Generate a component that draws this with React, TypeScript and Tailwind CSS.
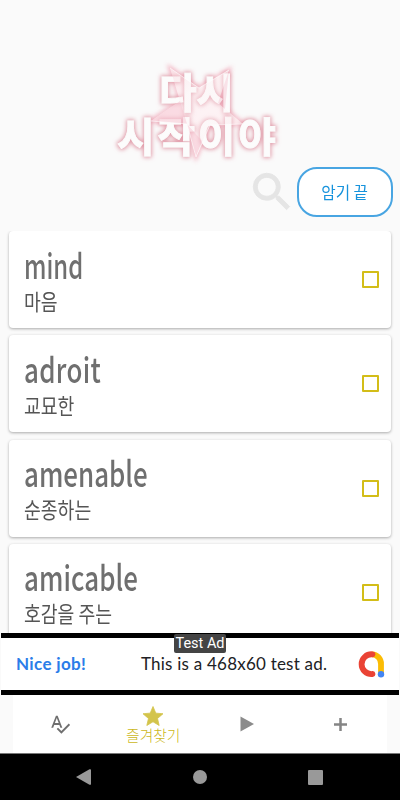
import type { ReactElement } from "react";

interface Word {
  id: string;
  term: string;
  meaning: string;
  fit: string;
}

const words: Word[] = [
  { id: "mind", term: "mind", meaning: "마음", fit: "scale-x-[0.68]" },
  { id: "adroit", term: "adroit", meaning: "교묘한", fit: "scale-x-[0.74] tracking-[0.4px]" },
  { id: "amenable", term: "amenable", meaning: "순종하는", fit: "scale-x-[0.74]" },
  { id: "amicable", term: "amicable", meaning: "호감을 주는", fit: "scale-x-[0.74] tracking-[0.1px]" },
];

const STAR_POINTS = "170,68 199,88 229,70 218,103 243,124 210,125 196,157 187,124 151,121 180,101";

function Logo(): ReactElement {
  return (
    <svg width="200" height="120" viewBox="100 50 200 120" className="mx-auto block overflow-visible">
      <defs>
        <filter id="glow" x="-20%" y="-30%" width="140%" height="160%">
          <feMorphology in="SourceAlpha" operator="dilate" radius="1" result="thick" />
          <feGaussianBlur in="thick" stdDeviation="2.3" result="blur" />
          <feFlood floodColor="#de8f9f" floodOpacity="0.9" />
          <feComposite in2="blur" operator="in" result="halo" />
          <feMerge>
            <feMergeNode in="halo" />
            <feMergeNode in="SourceGraphic" />
          </feMerge>
        </filter>
        <filter id="soft" x="-20%" y="-20%" width="140%" height="140%">
          <feGaussianBlur stdDeviation="2" />
        </filter>
        <linearGradient id="starFill" x1="0" y1="0" x2="1" y2="1">
          <stop offset="0" stopColor="#f3afbd" />
          <stop offset="0.35" stopColor="#fdf0f2" />
          <stop offset="0.65" stopColor="#fdf0f2" />
          <stop offset="1" stopColor="#f3afbd" />
        </linearGradient>
      </defs>
      <polygon points={STAR_POINTS} fill="none" stroke="#f0a0b2" strokeWidth="3.5" opacity="0.8" filter="url(#soft)" />
      <polygon points={STAR_POINTS} fill="#fdf3f5" />
      <g filter="url(#glow)" fill="#fcfcfc" stroke="#fcfcfc" strokeWidth="0.9" fontSize="41" fontWeight="700" fontFamily="'Noto Sans CJK KR', sans-serif">
        <text x="159" y="108" textLength="75">다시</text>
        <text x="117" y="152" textLength="159">시작이야</text>
      </g>
      <polygon points={STAR_POINTS} fill="url(#starFill)" opacity="0.35" />
      <path d="M170 68 180 101 151 121 187 124ZM229 70 218 103 225 109ZM187 124 196 157 202 141Z" fill="#f4b3c2" opacity="0.35" />
      <path d="M170 68 199 88 229 70M151 121 187 124 196 157 210 125 243 124" fill="none" stroke="#fff" strokeWidth="0.8" opacity="0.7" />
    </svg>
  );
}

function WordCard({ word }: { word: Word }): ReactElement {
  return (
    <li className="flex h-[97px] shrink-0 items-center justify-between rounded-[4px] bg-white pr-3 pl-[15px] shadow-[0_1px_3px_rgba(0,0,0,0.32)]">
      <div className="whitespace-nowrap">
        <div className={`h-[38px] origin-left text-[35px] leading-[38px] font-medium text-[#6f6f6f] ${word.fit}`}>
          {word.term}
        </div>
        <div className="mt-[2px] h-[30px] origin-left scale-x-[0.83] text-[22px] leading-[30px] text-[#555]">
          {word.meaning}
        </div>
      </div>
      <span className="h-[17px] w-[17px] rounded-[1px] border-2 border-[#d3bd18]" />
    </li>
  );
}

function AdBanner(): ReactElement {
  return (
    <div className="relative mx-px flex h-[62px] items-center border-y-[5px] border-black bg-white pr-[14px] pl-[15px] font-[Lato,sans-serif] text-[17px]">
      <span className="w-[125px] font-bold tracking-[0.35px] text-[#2b7de9]">Nice job!</span>
      <span className="flex-1 tracking-[0.22px] whitespace-nowrap text-[#202124]">This is a 468x60 test ad.</span>
      <svg width="27" height="27" viewBox="0 0 27 27" fill="none">
        <path d="M14 3.300A9.400 9.400 0 0 1 23 13V23" stroke="#fbbc04" strokeWidth="5.800" />
        <path d="M14.500 3.300A9.900 9.900 0 1 0 14.500 23" stroke="#ea4335" strokeWidth="5.800" strokeLinecap="round" />
        <circle cx="23" cy="23.200" r="3.200" fill="#4285f4" />
      </svg>
      <span className="absolute -top-[4px] left-[173px] h-[19px] w-[52px] rounded-[2px] bg-[#444] text-center font-[Roboto,sans-serif] text-[14.5px] leading-[20px] whitespace-nowrap text-white">
        Test Ad
      </span>
    </div>
  );
}

function BottomNav(): ReactElement {
  return (
    <nav className="mx-[13px] grid h-[58px] grid-cols-4 bg-white">
      <div className="flex items-center justify-center">
        <svg width="22" height="22" viewBox="0 0 24 24" fill="#6f6f6f">
          <path d="M12.45 16h2.09L9.43 3H7.57L2.46 16h2.09l1.12-3h5.64l1.14 3zm-6.02-5L8.5 5.48 10.57 11H6.43zm15.16.59l-8.09 8.09L9.83 16l-1.41 1.41 5.09 5.09L23 13l-1.41-1.41z" />
        </svg>
      </div>
      <div className="flex flex-col items-center pt-[11px] text-[#ccb719]">
        <svg width="20" height="20" viewBox="2 1.5 20 20" fill="#d3c44b" stroke="#d3c44b" strokeWidth="0.8" strokeLinejoin="round">
          <path d="M12 17.27 18.18 21l-1.64-7.03L22 9.24l-7.19-.61L12 2 9.19 8.63 2 9.24l5.46 4.73L5.82 21z" />
        </svg>
        <span className="text-[14.8px] leading-[18px] font-light whitespace-nowrap">즐겨찾기</span>
      </div>
      <div className="flex items-center justify-center">
        <svg width="14" height="16" viewBox="0 0 14 16">
          <path d="M0.5 0.5 14 8 0.5 15.5z" fill="#8b8b8b" />
        </svg>
      </div>
      <div className="flex items-center justify-center">
        <svg width="13" height="13" viewBox="0 0 13 13" stroke="#858585" strokeWidth="2.5">
          <path d="M6.5 0v13M0 6.5h13" />
        </svg>
      </div>
    </nav>
  );
}

function SystemBar(): ReactElement {
  return (
    <div className="flex h-[47px] items-center justify-between border-t border-[#777] bg-black pr-[77px] pl-[76px]">
      <svg width="15" height="16" viewBox="0 0 15 16" fill="#999">
        <path d="M0 8 13.5.3Q15-.2 15 1v14q0 1.200-1.500.7z" />
      </svg>
      <span className="h-[14px] w-[14px] rounded-full bg-[#999]" />
      <span className="h-[15px] w-[15px] rounded-[1px] bg-[#999]" />
    </div>
  );
}

export default function App(): ReactElement {
  return (
    <div className="flex h-[800px] w-[400px] flex-col overflow-hidden bg-[#fafafa] font-['Noto_Sans_CJK_KR',sans-serif]">
      <header className="h-[231px] shrink-0 pt-[50px]">
        <Logo />
        <div className="-mt-[3px] flex items-center justify-end pr-[7px]">
          <svg width="50" height="50" viewBox="0 0 24 24" fill="#e5e5e5" stroke="#e5e5e5" strokeWidth="0.4">
            <path d="M15.500 14h-.79l-.28-.27A6.471 6.471 0 0 0 16 9.500 6.500 6.500 0 1 0 9.500 16c1.610 0 3.090-.59 4.230-1.570l.27.28v.79l5 4.990L20.490 19l-4.990-5zm-6 0C7.010 14 5 11.990 5 9.500S7.010 5 9.500 5 14 7.010 14 9.500 11.990 14 9.500 14z" />
          </svg>
          <button type="button" className="h-[50px] w-24 rounded-[20px] border-2 border-[#48a5e2] bg-white text-[16.5px] text-[#1793dc]">
            <span className="inline-block scale-x-[0.95]">암기 끝</span>
          </button>
        </div>
      </header>
      <ul className="flex h-[402px] shrink-0 flex-col gap-[7.300px] overflow-hidden px-[9px]">
        {words.map((word) => (
          <WordCard key={word.id} word={word} />
        ))}
      </ul>
      <AdBanner />
      <BottomNav />
      <SystemBar />
    </div>
  );
}
